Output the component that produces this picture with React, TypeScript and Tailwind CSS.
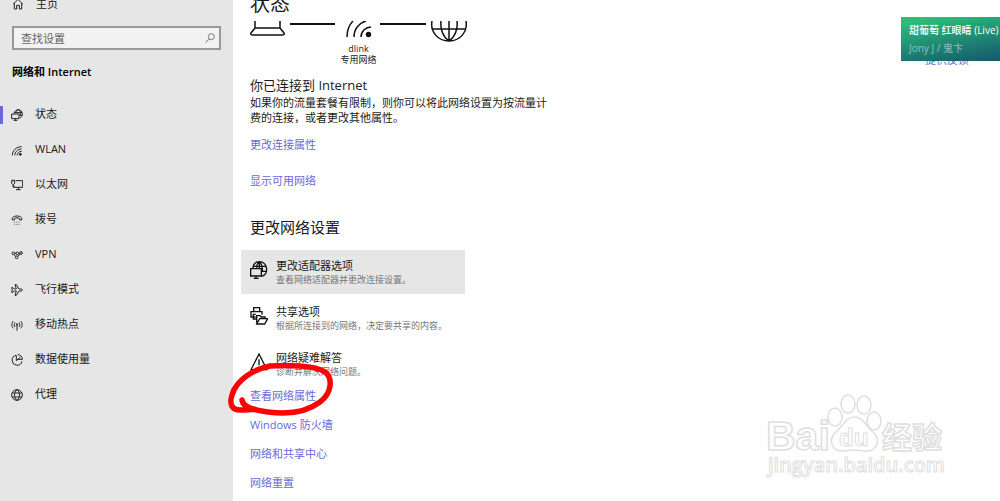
import React from "react"

const iconPaths = {
  home: 'M3 19 L18 4 L33 19 M7 16 V33 H14 V22 H22 V33 H29 V16',
  status: 'M9 13 C11 6 16 2 22 2 C29 2 34 8 34 15 C34 21 31 25 27 27 M9 11 H33 M15 11 C16 5 19 3 22 2 C26 4 28 9 28 15 C28 17 28 18 27 20 M26 19 H34 M2 15 H24 V29 H2 Z M8 34 H19 M13 29 V34',
  ethernet: 'M14 5 H35 V25 H9 V19 M22 25 V32 M15 32 H29 M2 5 H11 V13 L8 16 H5 L2 13 Z M4 2 V5 M9 2 V5 M6 16 V24 H9',
  dial: 'M4 18 C2 9 10 6 18 6 C26 6 34 9 32 18 L25 17 V13 C21 11 15 11 11 13 V17 Z',
  plane: 'M2 11 H6 L10 15 H16 L12 2 H16 L24 15 H31 C35 15 35 21 31 21 H24 L16 34 H12 L16 21 H10 L6 25 H2 L4 18 Z',
  data: 'M15 4 A15 15 0 1 0 33 22 M16 4 V20 L28 10 M20 2 A15 15 0 0 1 34 16 H20',
  proxy: 'M18 2 A16 16 0 1 0 18 34 A16 16 0 1 0 18 2 M4 12 H32 M4 24 H32 M18 2 C8 11 8 25 18 34 M18 2 C28 11 28 25 18 34',
}

function Icon({ d, children }: { d?: string; children?: React.ReactNode }) {
  return (
    <svg viewBox="0 0 36 36" className="h-3 w-3 shrink-0" fill="none" stroke="#222" strokeWidth="3" aria-hidden="true">
      {d && <path d={d} />}
      {children}
    </svg>
  )
}

const navItems = [
  { name: '状态', active: true, icon: <Icon d={iconPaths.status} /> },
  {
    name: 'WLAN',
    icon: (
      <Icon>
        <path d="M4 34 C4 20 16 8 32 8 M11 34 C12 24 20 15 32 15 M18 34 C19 27 24 22 32 22" />
        <circle cx="28" cy="31" r="3" fill="#222" />
      </Icon>
    ),
  },
  { name: '以太网', icon: <Icon d={iconPaths.ethernet} /> },
  {
    name: '拨号',
    icon: (
      <Icon d={iconPaths.dial}>
        <path d="M9 24 H27 M9 31 H27" strokeDasharray="3 4" strokeWidth="2" />
      </Icon>
    ),
  },
  {
    name: 'VPN',
    icon: (
      <Icon>
        <circle cx="7" cy="13" r="4" />
        <circle cx="19" cy="13" r="4" />
        <circle cx="30" cy="12" r="4" />
        <circle cx="17" cy="25" r="4" />
        <path d="M11 13 H15 M9 17 L14 22 M20 22 L28 15" />
      </Icon>
    ),
  },
  { name: '飞行模式', icon: <Icon d={iconPaths.plane} /> },
  {
    name: '移动热点',
    icon: (
      <Icon>
        <path d="M18 17 V35 M7 6 C1 12 1 22 7 28 M29 6 C35 12 35 22 29 28 M12 10 C9 14 9 20 12 24 M24 10 C27 14 27 20 24 24" />
        <circle cx="18" cy="16" r="2" fill="#222" />
      </Icon>
    ),
  },
  { name: '数据使用量', icon: <Icon d={iconPaths.data} /> },
  { name: '代理', icon: <Icon d={iconPaths.proxy} /> },
]

const options = [
  {
    name: '更改适配器选项',
    description: '查看网络适配器并更改连接设置。',
    active: true,
    icon: (
      <path d="M9 21 C10 9 18 2 28 2 C41 2 50 12 50 25 C50 36 43 44 35 46 M9 16 H47 M28 2 V24 M20 20 C20 12 23 6 28 2 C35 9 38 17 37 30 M35 31 H49 M2 23 H34 V45 H2 Z M11 52 H26 M18 45 V52" />
    ),
  },
  {
    name: '共享选项',
    description: '根据所连接到的网络，决定要共享的内容。',
    icon: (
      <path d="M11 14 V2 H29 V14 M17 30 H3 V14 H36 V23 M17 22 H10 V36 H18 M20 47 V26 H30 L34 30 H45 V35 M20 51 L29 35 H53 L44 51 Z" />
    ),
  },
  {
    name: '网络疑难解答',
    description: '诊断并解决网络问题。',
    icon: <path d="M27 3 L51 50 H3 Z M27 19 V37 M27 41 V45" />,
  },
]

const links = ['查看网络属性', 'Windows 防火墙', '网络和共享中心', '网络重置']

function Sidebar() {
  return (
    <aside className="w-[233px] shrink-0 bg-[#e6e6e6]">
      <a href="#home" className="-mt-1.5 flex h-5 items-center gap-3 pl-3">
        <Icon d={iconPaths.home} />
        主页
      </a>
      <div className="mx-3 mt-3 flex h-6 items-center border-2 border-[#999] bg-[#f2f2f2] pr-1">
        <input
          type="text"
          aria-label="查找设置"
          placeholder="查找设置"
          className="h-full w-full min-w-0 bg-transparent pl-[7px] outline-none placeholder:text-[#666]"
        />
        <svg viewBox="0 0 30 30" className="h-2.5 w-2.5 shrink-0" fill="none" stroke="#777" strokeWidth="3" aria-hidden="true">
          <circle cx="19" cy="11" r="9" />
          <path d="M13 18 L2 28" />
        </svg>
      </div>
      <h2 className="mt-3 pl-3 leading-5 font-bold text-black">网络和 <span className="font-semibold">Internet</span></h2>
      <nav className="mt-[15px]">
        {navItems.map((item) => (
          <a key={item.name} href="#nav" className="flex h-[35px] items-center">
            <span className={item.active ? 'mr-2 h-[18px] w-[3px] bg-[#6b69d6]' : 'mr-2 w-[3px]'} />
            {item.icon}
            <span className="ml-3">{item.name}</span>
          </a>
        ))}
      </nav>
    </aside>
  )
}

function NetworkDiagram() {
  return (
    <div className="mt-[3px] w-[217px]">
      <svg viewBox="0 0 217 22" className="block w-full" fill="none" stroke="#111" strokeWidth="2" aria-hidden="true">
        <path d="M5 0 V7 L1 12 Q0 14 3 14 H32 Q35 14 34 12 L30 7 V0 M5 7 H30" strokeWidth="1.5" />
        <path d="M40 3 H85 M130 3 H176" />
        <path d="M97 16 C97 9 99 4 103 0 M104 16 C104 8 109 2 116 0 M111 16 C111 10 116 6 121 6" strokeWidth="1.5" />
        <circle cx="118.500" cy="13.500" r="2.700" fill="#111" stroke="none" />
        <path d="M182 0 C180 11 188 20 199 20 C210 20 218 11 216 0 M183 8 H215 M199 0 V20 M191 0 C190 8 193 16 199 20 C205 16 208 8 207 0" strokeWidth="1.500" />
      </svg>
      <p className="text-center text-[9px] leading-[11px]">
        dlink
        <br />
        专用网络
      </p>
    </div>
  )
}

function Watermark() {
  return (
    <svg
      viewBox="0 0 190 90"
      className="pointer-events-none absolute right-[46px] bottom-[21px] w-[190px]"
      fill="#fff"
      stroke="#dedede"
      strokeWidth="1.5"
      fontFamily="'Liberation Sans', 'Noto Sans CJK SC', sans-serif"
      fontWeight="700"
    >
      <text x="2" y="60" fontSize="41">Bai</text>
      <ellipse cx="71" cy="27" rx="7" ry="9" />
      <ellipse cx="84" cy="14" rx="7" ry="9" />
      <ellipse cx="100" cy="15" rx="7" ry="9" />
      <ellipse cx="110" cy="31" rx="7" ry="9" />
      <path d="M90 27 C99 27 101 35 108 41 C117 48 114 61 103 61 C97 61 95 60 90 60 C85 60 83 61 78 61 C67 61 64 49 72 42 C79 36 82 27 90 27 Z" />
      <text x="75" y="56" fontSize="24" strokeWidth="1">du</text>
      <text x="118" y="58" fontSize="30">经验</text>
      <text x="4" y="82" fontSize="20" fontFamily="'Open Sans', sans-serif" fontWeight="600" strokeWidth="1">jingyan.baidu.com</text>
    </svg>
  )
}

export default function App() {
  return (
    <div className="relative flex min-h-screen overflow-hidden bg-white font-['Open_Sans','Noto_Sans_CJK_SC',sans-serif] text-[11px] text-[#1a1a1a]">
      <Sidebar />

      <main className="min-w-0 flex-1 pl-[17px]">
        <h1 className="-mt-2.5 text-xl leading-7">状态</h1>
        <NetworkDiagram />

        <h2 className="mt-2.5 text-[13px] leading-5">你已连接到 Internet</h2>
        <p className="max-w-[300px] leading-[15px]">
          如果你的流量套餐有限制，则你可以将此网络设置为按流量计费的连接，或者更改其他属性。
        </p>
        <div className="mt-2.5 flex flex-col items-start gap-4 leading-5 text-[#6b69d6]">
          <a href="#properties">更改连接属性</a>
          <a href="#available">显示可用网络</a>
        </div>

        <h2 className="mt-6 text-[15px] leading-6">更改网络设置</h2>
        <div className="mt-[11px] -ml-[9px] flex max-w-[224px] flex-col gap-0.5">
          {options.map((option) => (
            <button
              key={option.name}
              type="button"
              className={
                option.active
                  ? 'flex h-11 items-center gap-2 bg-[#e6e6e6] pl-[9px] text-left'
                  : 'flex h-11 items-center gap-2 pl-[9px] text-left'
              }
            >
              <svg viewBox="0 0 54 54" className="mb-1 h-[18px] w-[18px] shrink-0" fill="none" stroke="#111" strokeWidth="4" aria-hidden="true">
                {option.icon}
              </svg>
              <span className="whitespace-nowrap">
                <span className="block leading-[14px]">{option.name}</span>
                <span className="block text-[9px] leading-[13px] text-[#777]">{option.description}</span>
              </span>
            </button>
          ))}
        </div>
        <div className="flex flex-col items-start gap-[9px] pb-2 leading-5 text-[#6b69d6]">
          {links.map((link) => (
            <a key={link} href="#link">{link}</a>
          ))}
        </div>
      </main>

      <div className="w-[75px] shrink-0 pt-[50px] leading-5 text-[#6b69d6]">
        <a href="#feedback">提供反馈</a>
      </div>

      <svg viewBox="0 0 110 60" className="pointer-events-none absolute top-[360px] left-[226px] w-[110px]" fill="none" stroke="#f80505" strokeWidth="5.500" strokeLinecap="round" aria-hidden="true">
        <path d="M16 40 C17 47 26 50 42 52 C64 55 82 51 94 42 C106 33 107 18 99 12 C89 5 60 5 44 6 C28 9 10 20 6 35 C3 44 6 50 14 50 C19 50 23 50 28 49" />
      </svg>

      <div className="absolute top-[17px] right-0 w-[99px] bg-linear-170 from-[#2ebd78] from-10% to-[#17576a] py-1 pl-2 text-[10px] leading-[18px] whitespace-nowrap text-white">
        <p className="font-medium">甜葡萄 红眼睛 (Live)</p>
        <p className="text-white/50">Jony J / 鬼卞</p>
      </div>

      <Watermark />
    </div>
  )
}
